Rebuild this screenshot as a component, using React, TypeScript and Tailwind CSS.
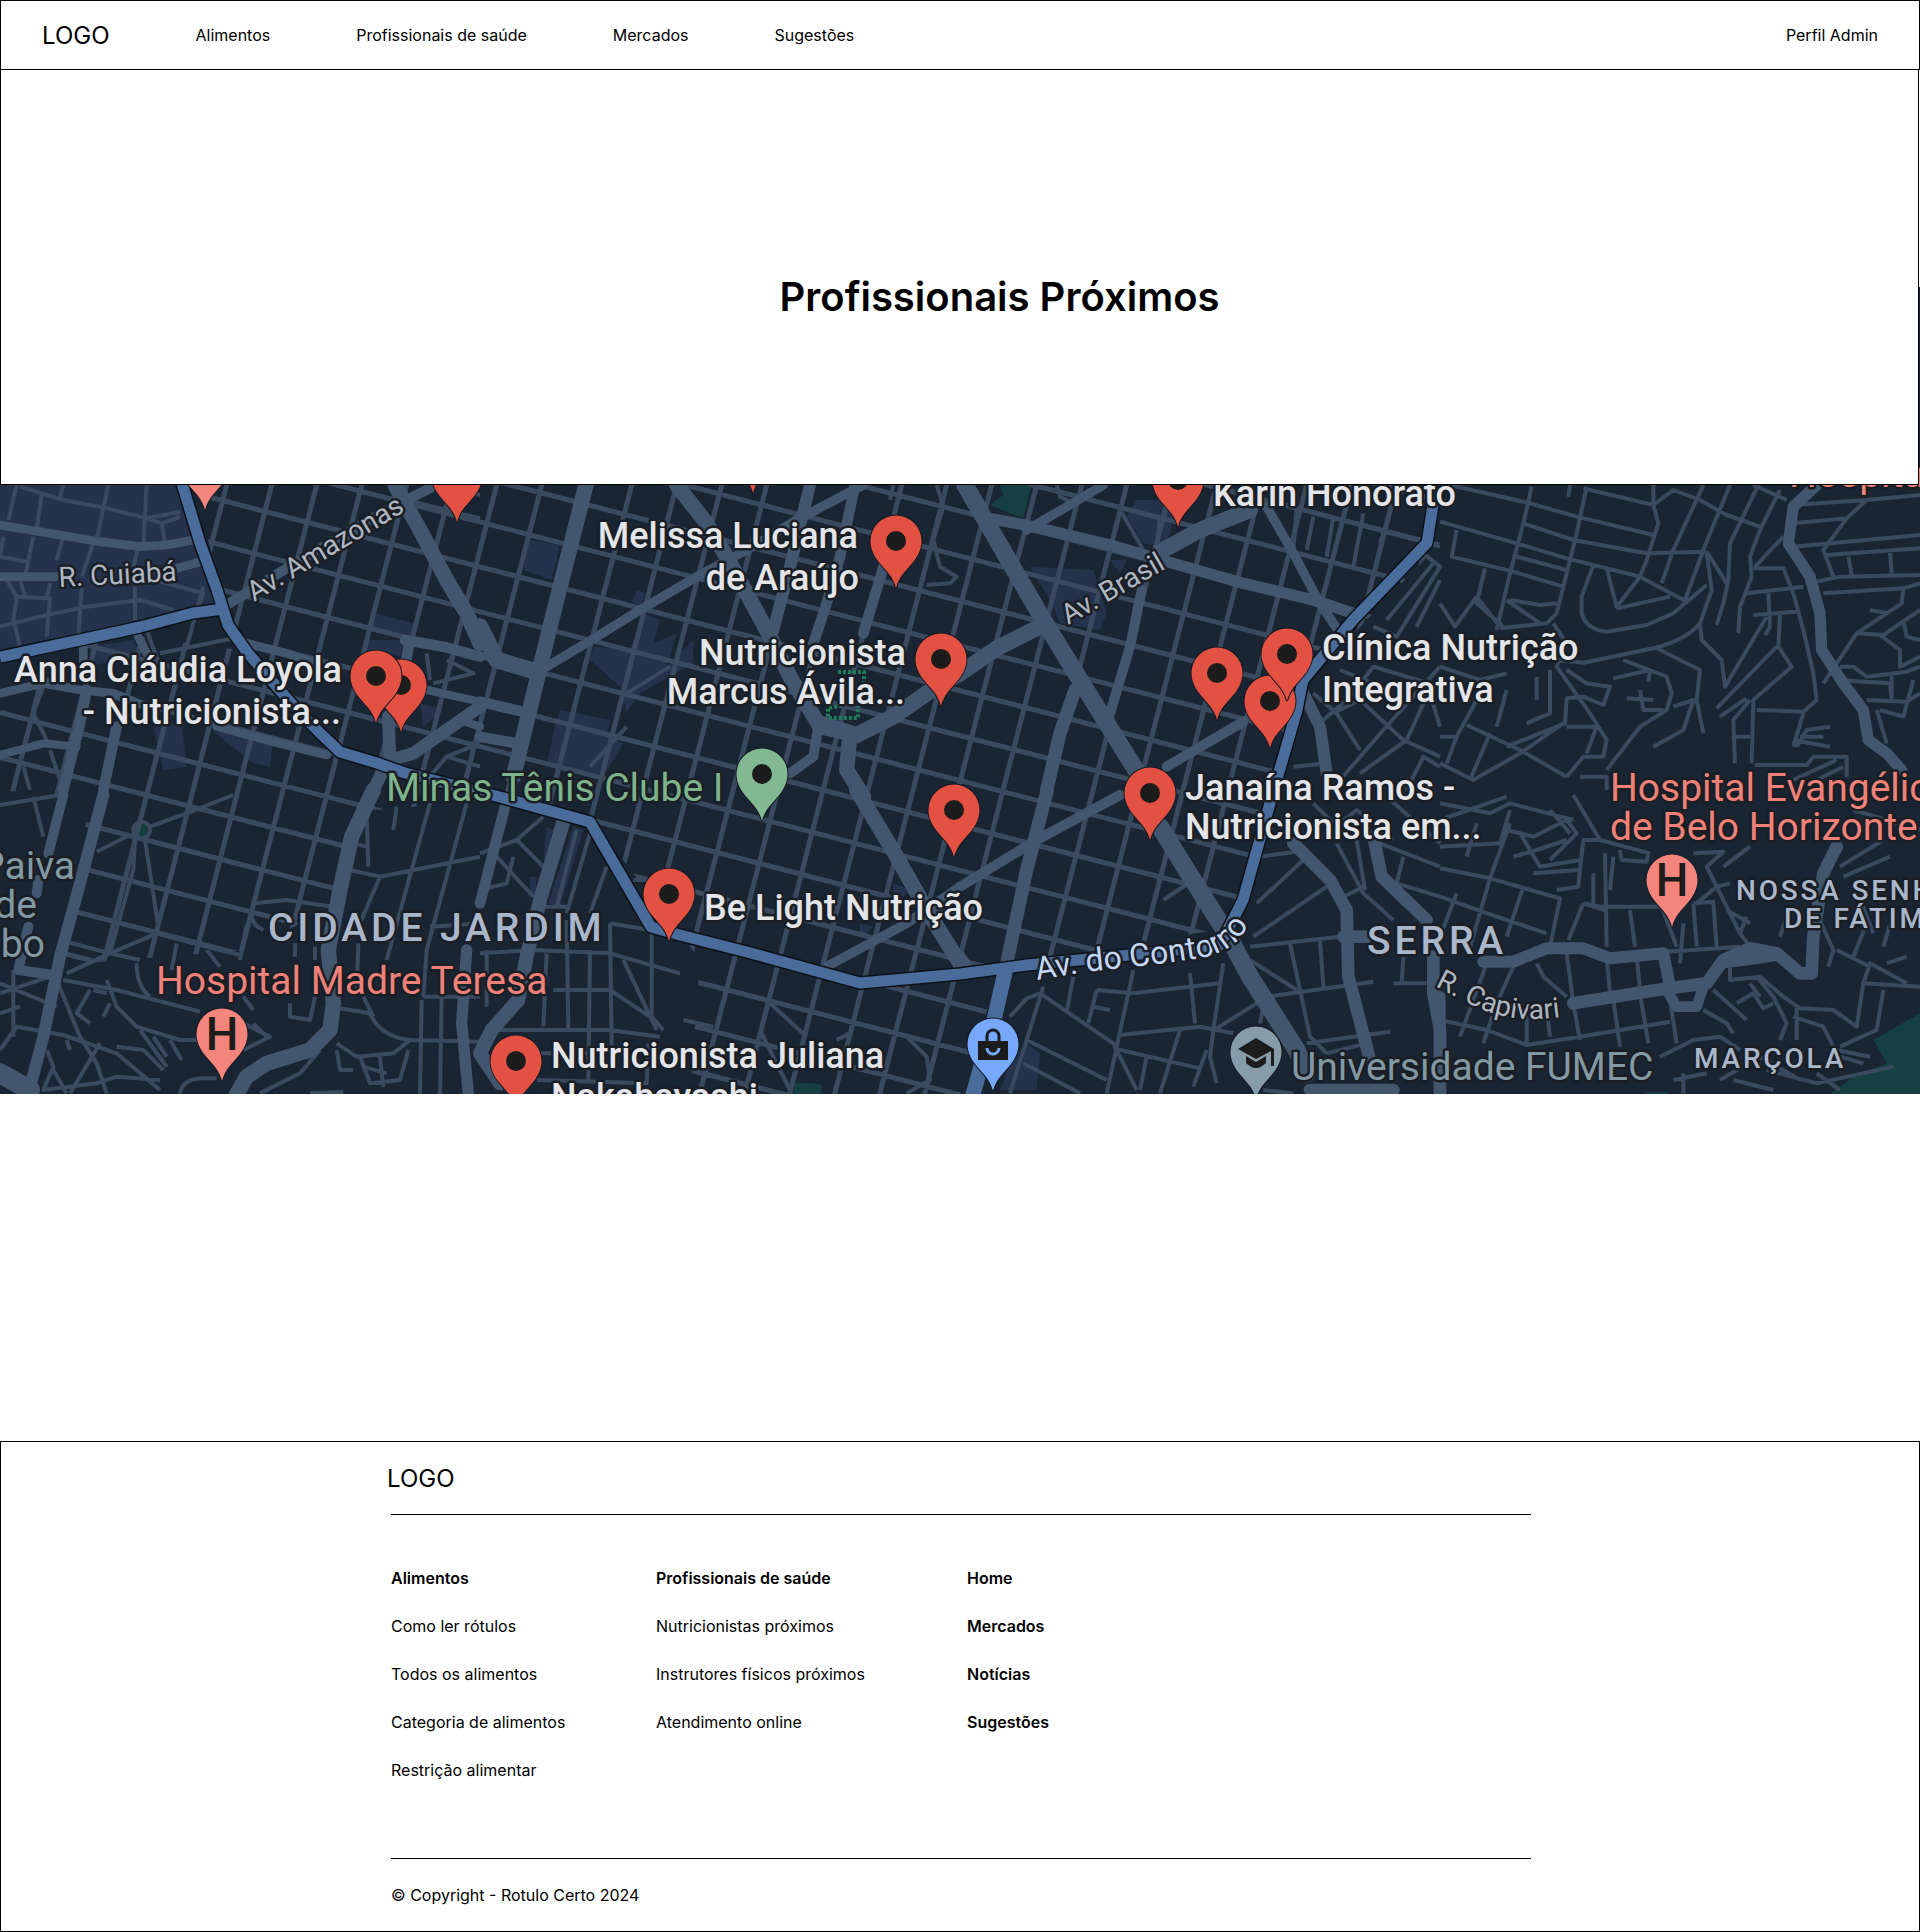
type Road = [width: number, d: string];

type Tile = {
  x: number;
  y: number;
  blocks: string;
  parks: string;
  lanes: string;
  streets: Road[];
};

const NAV = ["Alimentos", "Profissionais de saúde", "Mercados", "Sugestões"];

const FOOTER_COLUMNS = [
  {
    title: "Alimentos",
    width: "w-[265px]",
    links: ["Como ler rótulos", "Todos os alimentos", "Categoria de alimentos", "Restrição alimentar"],
  },
  {
    title: "Profissionais de saúde",
    width: "w-[311px]",
    links: ["Nutricionistas próximos", "Instrutores físicos próximos", "Atendimento online"],
  },
];

const FOOTER_MAIN = ["Home", "Mercados", "Notícias", "Sugestões"];

/* The inner city is a regular grid of streets, turned by about 14 degrees. */
const SLOPE = 0.258;
const CITY_GRID = [
  ...Array.from({ length: 34 }, (_, i) => {
    const y = 522 + 44.9 * (i - 12);
    return `M0 ${y - 480 * SLOPE}L1920 ${y + 1440 * SLOPE}`;
  }),
  ...Array.from({ length: 44 }, (_, i) => {
    const x = 498 + 45 * (i - 12);
    return `M${x} 480L${x - 620 * SLOPE} 1100`;
  }),
].join("");

const CITY_AREA =
  "M195 485H1440L1462 520L1310 680L1260 830L1240 925L1000 970L960 1094H690L700 960L600 830L500 800L350 812L335 905L250 950L60 965L90 800L0 790V700L90 630L240 650L225 610Z";

/* Tiles are drawn at three units to the pixel. */
const TILES: Tile[] = [
  {
    x: 0,
    y: 480,
    blocks:
      "M0 15H560L650 370L0 520ZM1110 395L1240 430L1230 470L1110 440ZM1100 480H1215L1200 530L1100 510ZM460 740L545 730L560 860L490 870ZM640 755L820 775L810 860L760 850ZM270 500L400 480L420 520L270 560ZM1260 670L1330 690L1270 740Z",
    parks: "",
    lanes:
      "M50 15L25 120M125 40L110 150M190 15L180 50M60 20L190 60L300 80L440 115L540 95M325 15L290 180M440 15L430 200M440 115L485 130L495 190M485 130L540 110M100 170L75 290M190 170L170 240M10 170L0 230M280 190L245 290M0 230L80 245M415 200L400 260M20 300L50 350L140 355L150 310M50 350L40 420L60 500M60 300L75 350M150 350L140 470M245 320L235 470M405 320L405 420M0 440L140 405L260 380L420 360L520 390M420 290L520 315L610 340L590 400M610 320L560 500M480 520L700 475M440 450L480 560M70 860L90 930M150 810L190 930M130 620L100 700L150 800M1330 15L1440 45M1220 60L1440 115M1440 790L1340 830L1280 900L1240 930M1340 830L1440 860M1280 520L1290 600M1340 540L1420 580L1300 610",
    streets: [
      [26, "M0 135L180 165L300 185L420 200L500 195L580 180"],
      [26, "M530 265L620 240M0 290H170"],
      [30, "M680 375L860 265L1090 130L1200 70L1290 25"],
      [46, "M1185 15L1260 150L1340 300L1400 400L1440 490"],
      [26, "M740 490L860 520L950 550M650 740L800 780L980 825"],
      [32, "M1215 480L1330 500L1440 530M1228 490L1215 560"],
      [38, "M1440 680L1340 750L1240 820L1170 840L1165 710M1165 840L1120 930"],
      [26, "M0 640L130 610L240 630L340 640L440 680M410 460L440 520M250 500V560"],
      [32, "M260 630L240 730L190 930M350 740L310 930"],
      [24, "M0 825L130 790L230 800M1280 630L1440 665M1380 720L1440 740"],
    ],
  },
  {
    x: 480,
    y: 480,
    blocks:
      "M150 180L240 195L215 300L130 270ZM470 330L495 340L485 380L455 365ZM490 400L540 420L520 490L590 460L560 560L640 480V550L480 640L440 695L420 620L330 540L340 500L450 510ZM240 690L390 720L380 770L430 790L370 890L200 860L220 760Z",
    parks: "",
    lanes: "M330 860L440 740M440 640L570 560M1370 15L1390 80L1360 180L1380 260L1430 290L1410 310L1340 315M1240 15L1230 60",
    streets: [
      [46, "M318 15L210 440L100 890"],
      [46, "M590 15L680 130L740 230L860 450L930 590L1020 740L1110 760"],
      [28, "M200 560L350 470L480 390L650 290L800 210L950 120L1150 15"],
      [36, "M990 15L930 260L880 450"],
      [32, "M1125 15L1080 230L1040 370L1000 490M1220 230L1150 460"],
      [50, "M0 440L50 540L170 575"],
      [32, "M0 665L150 700M0 770L110 790"],
      [48, "M1020 730L1130 765L1240 710L1340 640L1440 580"],
      [46, "M1110 760L1100 870L1150 950"],
      [30, "M1015 740L1000 830L930 880"],
    ],
  },
  {
    x: 960,
    y: 480,
    blocks:
      "M210 260L400 270L440 400L420 450L300 430L270 360ZM530 60L600 60L640 110L620 200L550 190L500 110ZM450 240L500 240L480 280Z",
    parks: "M120 15H215L190 115L90 75L130 45Z",
    lanes:
      "M290 15L300 50L340 70M480 90L550 210M600 110L590 200M1010 80L1000 210M1060 110L1040 210M1120 110L1100 230M1210 100L1180 260M1280 130L1260 190M1050 95L1440 200M1390 220L1440 260L1310 470L1240 440M1440 300L1370 440M1420 250L1280 420M1060 640L1130 700L1200 810M1090 720L1170 650L1240 560L1440 620M1140 570L1240 610M1120 700L1200 660L1330 780L1440 830M1140 900L1270 750L1440 560M1200 880L1340 780L1400 650M1340 930L1390 830L1440 860M1000 860L1100 850M1410 640L1440 740",
    streets: [
      [52, "M15 15L250 420L360 600L540 890"],
      [48, "M0 580L110 505L240 440M600 215L720 150L870 90"],
      [28, "M200 150L320 80L430 15M920 80L1000 220L1080 370L1140 460"],
      [34, "M60 110L220 140L450 195L640 250L850 310L1060 360L1180 400"],
      [30, "M545 330L510 500L450 700M620 860L850 725"],
      [40, "M345 630L300 760L260 930"],
      [36, "M1030 640L1080 740L1100 880"],
    ],
  },
  {
    x: 1440,
    y: 480,
    blocks: "",
    parks: "",
    lanes:
      "M30 15L270 70L410 110L640 165M0 125L230 190L380 235L600 290L740 365M250 130L400 180L620 220L800 215M430 25L640 75L700 30L780 60L860 105L960 140M275 20L250 130L210 280L170 450M440 20L410 160L370 320L350 400L320 430L180 445M50 150L35 230L220 275L370 320M230 230L380 270M390 15L385 50M640 15V75L655 130L620 240L600 290L530 380L500 265M790 15L700 210L665 310M870 15L790 210L735 360M950 25L870 190L865 300L850 370L830 435M940 15L1040 60M1020 30L960 150L930 230L935 290L900 380L895 460M945 260L1030 170M460 255L425 350V400Q440 450 500 455L620 435L700 400L800 315M530 385L690 350M800 215L860 310M800 215L815 330L780 430Q740 480 640 505L430 548L350 540M780 430L785 480L845 540L855 620L980 410M650 505L780 570L770 660L790 760M940 265H1030L1060 340L1090 450L1120 580L1130 660L1090 695L950 690M920 340L1090 320M940 405L1070 395M985 340L990 440L975 465M1020 400L1015 500L1055 560L940 660L935 850M830 685L1010 500M340 430L380 490L350 560L450 700L500 780L490 830L430 830L380 890M550 540L680 590L695 640L680 690L600 740L500 870M520 595L630 570L625 605M560 655L640 660M600 630L610 690H670M640 800L730 750L760 660L700 680M380 570L440 610L510 620L490 675L430 650L380 655L375 730L200 800M0 850L100 900L240 820L370 730M80 735L240 810L380 890M0 770L50 770L110 660M50 770L20 850M150 760L90 900M380 740H470L440 820M200 360L300 430M210 360L300 375L350 370M110 350L45 440L0 370M110 350L180 440M135 265L110 370L190 440M0 560L120 600L200 580M200 630L170 740M330 570V700L260 730M290 590V660M1060 75L1280 60L1440 45M1060 130L1220 115L1280 60M1220 115L1150 210L1180 290M1060 200L1220 185L1440 165M1160 225L1440 205M1225 230L1235 285M1350 215L1355 280M1130 305L1200 290L1440 285M1150 340L1390 325L1440 310M1390 325L1385 370L1250 460L1150 610M1290 390L1340 400M1250 460L1330 465L1440 390M1320 465L1380 510V560L1440 530M1390 420L1400 470L1440 480M1200 560H1240L1280 590L1400 575L1440 560M1190 600L1350 610L1355 660M1355 580V660M1280 660L1400 665L1440 640M1320 690L1390 710L1420 600M1310 690L1340 790M945 855H1100L1120 830H1220V890M1070 800L1100 750L1170 740M1060 780L1170 800M1080 770H1150M885 850L880 720L930 660M840 710L920 655M1090 700L1060 800M875 770H930M1060 900L1190 840M1110 910L1210 860M420 890H500V930",
    streets: [[34, "M1130 15L1060 80L1045 190L1110 290L1140 400L1145 510L1210 610L1270 690L1285 780L1340 820L1385 870"]],
  },
  {
    x: 0,
    y: 790,
    blocks: "",
    parks: "M410 105H440V135L425 145L408 135Z",
    lanes:
      "M0 45L180 15M100 20L130 140M290 185L390 135M450 110L560 70L700 15M400 120A25 25 0 1 0 450 120A25 25 0 1 0 400 120M405 150L400 240L330 490M435 150L475 410M180 450L330 490L420 510M200 550L330 490L470 430M470 430L600 465L720 495M620 480L660 530M740 405L720 510M530 460L515 540M410 520Q410 590 450 620M190 570L350 600L600 665M0 610L150 560M0 580L170 650M40 540V740M170 570L240 740L290 820L320 910M0 780L50 710L190 735L350 790L480 900M320 570L350 650L410 710L540 750H600M270 600L230 670L270 700M310 680L330 640M280 600L320 610M420 720L500 830M510 750L545 810M350 770L430 780L490 840M460 740L500 800M140 780L160 830L130 900L290 880L350 860L480 870M160 840L200 910M300 760L210 910M200 750L210 780M540 912Q545 870 600 865L650 865M730 620L760 660M730 700L810 740L730 780M760 700L800 740M760 340L860 330L1000 350M760 340Q740 400 790 420M1050 240L1140 260L1240 240L1440 200M1140 260L1080 400M1075 460L1070 600M1290 40L1160 510M1400 40L1280 480L1270 620M1270 620H1440M1265 630L1260 912M1325 620L1320 912M1230 750L1440 755M1290 410L1440 400M1020 655L1110 670Q1140 740 1230 750L1180 790L1070 800L1010 760M1090 620L1120 680M960 780L900 850L780 910M930 910L1030 905M870 640V680L930 690L945 620M885 460V500M945 470V510M1080 800L1110 880L1200 870L1225 780M1090 830L1160 850M1140 800L1150 890M1010 780L1020 840H1060M1190 50L1180 120M1100 70L1105 230M1060 160L1100 170M0 670L60 650",
    streets: [
      [30, "M190 15L145 190M115 270L110 310M85 410L55 540L160 555"],
      [36, "M310 15L240 280L180 500L130 740L85 912"],
      [46, "M1120 0L1055 140L1020 300L985 480L1000 640L990 720L930 780L800 820L740 860L710 912"],
      [60, "M0 850L90 900"],
      [34, "M1400 480L1385 700L1405 912"],
    ],
  },
  {
    x: 480,
    y: 790,
    blocks:
      "M280 110L310 120L240 350L205 340ZM200 110L220 120L190 220ZM150 260L170 260L165 320L150 310ZM1240 280L1290 300L1270 320L1240 310ZM1140 400L1180 410L1160 430L1140 430Z",
    parks: "M945 880H1000L1025 885V912H940Z",
    lanes:
      "M110 150L190 230M0 190L110 150L190 80M50 200L160 320M0 300L80 280L100 200M290 120L230 350M330 130L260 370M380 230L330 370M180 350H260M0 490L160 480L390 490L600 550M20 480V650M200 490L190 710M260 390L265 720M330 480L325 870M390 400L395 770M515 420V680L550 720M390 400L510 420M220 600H390L510 680M60 720H390L540 740M430 510L530 720M160 790H320M170 870L500 880L505 760M460 270H500M870 640L980 740M840 720L930 900M1280 740L1340 800L1350 870L1280 910M1070 750L1110 730M610 690L700 710",
    streets: [
      [32, "M75 50L0 340"],
      [42, "M250 95L180 330L140 500L115 630L35 720L0 790L60 880"],
      [46, "M1130 0L1250 200L1340 360L1440 520"],
      [28, "M1040 530L1280 400L1440 290"],
    ],
  },
  {
    x: 960,
    y: 790,
    blocks: "M200 760L240 790L230 900H120L150 820Z",
    parks: "",
    lanes:
      "M690 550L705 700M790 520L760 720L750 800L770 880M410 600L520 610L780 580M480 735L720 710L820 730M770 715L890 640M660 720L600 910M240 610L460 760L530 900M250 590L150 910M150 680L200 625L240 610M410 600L385 700M400 650L450 660M340 560L320 665M520 540L440 910M200 750L440 870M190 820L360 910M460 775L720 835M560 800L540 900M740 780L700 890M870 470L1140 440M880 440L1100 290M890 340L1030 210M990 460L1050 740L1100 790M1080 450L1090 590M870 510L1010 600M920 620L1240 575M1040 760L1290 725M1100 790L1220 760M900 700L910 650M1130 160L1210 310L1300 390M1190 150L1215 300M1150 320L1210 290M1330 200L1310 280L1440 320M1260 160L1440 230M1300 580H1400M1330 500L1325 580M900 200L1010 185M1060 40L1120 100M1140 100L1190 60L1300 150M1280 20L1440 160M700 270L610 330M910 900L1000 910",
    streets: [
      [54, "M600 110L680 240L800 430L870 560L1010 780L1040 850"],
      [30, "M0 290L230 150L480 15"],
      [40, "M262 0L200 240L140 520"],
      [38, "M1000 160L1110 270L1160 360L1165 560L1230 810M1150 440H1220"],
      [38, "M1240 140L1265 260L1400 390M1420 500V610L1440 720V912"],
      [38, "M1050 900H1300"],
      [34, "M0 500L20 530"],
    ],
  },
  {
    x: 1440,
    y: 790,
    blocks: "",
    parks: "M1440 670L1300 750L1340 820L1240 860L1170 912H1440ZM620 905H680V912H620Z",
    lanes:
      "M0 235L150 265L360 325L330 470M0 320L170 380L320 430M210 100L150 265L85 490M250 290L200 440M50 310L0 440M0 40L150 70L210 40L400 90M0 90L200 20M0 170L180 160L210 60M80 200L110 100M200 120L280 140L380 90L410 130L330 210M240 130L300 230L420 210M330 60L390 130M220 200L290 180L380 150M400 15L480 150L630 190M280 250L420 240L430 150L480 150M420 240L415 290L350 300M430 340L480 350L660 350M430 340L385 450M430 340L495 360M495 190L500 470M570 360L585 470M540 180L545 210L620 215L625 190M460 250V340M520 200L510 300M760 340L770 470M820 340L830 470M760 340L825 335M680 485L900 470M665 350L710 470M730 400L720 520M830 290L900 430L930 470M830 290L770 340M760 190L850 185L800 230L830 290M850 230L930 170M830 290L870 280M500 500L510 610M590 500L600 600M380 490L400 640L420 750M290 520L310 560L380 620M220 530L170 640L130 760M140 520L60 740M0 690L140 720L260 765L420 740L690 695M520 630L540 770M600 610L625 760M690 630L710 760M260 670V770M320 660L330 740M660 800L760 750L840 740L900 780M790 660L860 700L880 730M820 600L920 690M870 530V570L960 560L1030 620L1080 655L1180 660L1250 710L1270 580L1440 590M1270 580L1290 520L1400 580M1190 480L1290 530M950 560L1000 620L1040 700L1020 750M890 640L940 610L970 655L1000 640M930 580L960 620M1060 680L1150 710L1180 770M1070 650V750M1330 600L1310 720L1200 770M1190 780L1290 800M1200 800L1270 820M840 870L960 800L1080 870M700 870L800 850M1130 850L1200 900M730 850V910M880 870L1000 900M980 840L1130 880L1360 830M1020 440L1040 380M1130 370L1180 480L1165 530M1280 400L1240 500M1200 230L1330 150M1210 260L1350 200M1240 60L1440 120M860 360L930 400M1260 330L1300 430M1360 370L1330 470M1400 500L1340 520M920 380L900 430",
    streets: [
      [36, "M130 515H220L320 475L430 475L510 505L670 490L690 590"],
      [38, "M400 640L650 600L800 580L850 510L930 475L1010 490L1080 550L1115 550L1120 440L1150 250L1190 170"],
      [32, "M680 600L710 650L770 650L790 590"],
      [30, "M850 520L930 510L1000 500"],
      [34, "M0 620V750"],
    ],
  },
];

const HIGHWAYS =
  "M181 480L200 543L217 590L228 625L247 652L290 702L320 733L340 752L377 763L405 773L500 797L590 822L651 927L680 935L747 952L860 983L960 974L1027 965L1160 952L1220 945L1243 900L1270 803L1297 710L1303 680L1353 620L1427 543L1433 505M0 657L80 640L140 627L193 613L223 609";

type Kind = "place" | "health" | "sport" | "school" | "district" | "area" | "road";

const LABEL_STYLE: Record<Kind, string> = {
  place: "fill-[#e3e5e9] text-[36px] font-medium",
  health: "fill-[#ee8278] text-[39px]",
  sport: "fill-[#7db48b] text-[39px]",
  school: "fill-[#8299a4] text-[39px]",
  district: "fill-[#aab6ca] text-[39px] font-medium tracking-widest",
  area: "fill-[#aab6ca] text-[28px] font-medium tracking-widest",
  road: "fill-[#aeb6c2] text-[28px]",
};

type Label = { kind: Kind; x: number; y: number; text: string; end?: boolean; turn?: number };

const LABELS: Label[] = [
  { kind: "place", x: 342, y: 682, text: "Anna Cláudia Loyola", end: true },
  { kind: "place", x: 341, y: 724, text: "- Nutricionista...", end: true },
  { kind: "place", x: 858, y: 548, text: "Melissa Luciana", end: true },
  { kind: "place", x: 859, y: 590, text: "de Araújo", end: true },
  { kind: "place", x: 906, y: 665, text: "Nutricionista", end: true },
  { kind: "place", x: 905, y: 704, text: "Marcus Ávila...", end: true },
  { kind: "place", x: 1213, y: 506, text: "Karin Honorato" },
  { kind: "place", x: 1322, y: 660, text: "Clínica Nutrição" },
  { kind: "place", x: 1322, y: 702, text: "Integrativa" },
  { kind: "place", x: 1185, y: 800, text: "Janaína Ramos -" },
  { kind: "place", x: 1185, y: 839, text: "Nutricionista em..." },
  { kind: "place", x: 704, y: 920, text: "Be Light Nutrição" },
  { kind: "place", x: 551, y: 1068, text: "Nutricionista Juliana" },
  { kind: "place", x: 551, y: 1109, text: "Nakabayashi" },
  { kind: "sport", x: 386, y: 801, text: "Minas Tênis Clube I" },
  { kind: "health", x: 156, y: 994, text: "Hospital Madre Teresa" },
  { kind: "health", x: 1610, y: 801, text: "Hospital Evangélico" },
  { kind: "health", x: 1610, y: 840, text: "de Belo Horizonte" },
  { kind: "health", x: 1789, y: 487, text: "Hospital" },
  { kind: "school", x: 1291, y: 1080, text: "Universidade FUMEC" },
  { kind: "school", x: 75, y: 879, text: "Paiva", end: true },
  { kind: "school", x: 37, y: 918, text: "de", end: true },
  { kind: "school", x: 45, y: 957, text: "bo", end: true },
  { kind: "district", x: 268, y: 941, text: "CIDADE JARDIM" },
  { kind: "district", x: 1367, y: 954, text: "SERRA" },
  { kind: "area", x: 1736, y: 900, text: "NOSSA SENHORA" },
  { kind: "area", x: 1784, y: 928, text: "DE FÁTIMA" },
  { kind: "area", x: 1694, y: 1068, text: "MARÇOLA" },
  { kind: "road", x: 59, y: 587, text: "R. Cuiabá", turn: -3 },
  { kind: "road", x: 254, y: 602, text: "Av. Amazonas", turn: -31 },
  { kind: "road", x: 1068, y: 625, text: "Av. Brasil", turn: -30 },
];

const RED_PINS = [
  [457, 522],
  [753, 493],
  [1178, 527],
  [401, 732],
  [376, 723],
  [896, 588],
  [941, 706],
  [1217, 720],
  [1270, 748],
  [1287, 701],
  [1150, 840],
  [954, 857],
  [669, 941],
  [516, 1108],
];

const HOSPITAL_PINS = [
  [205, 510],
  [222, 1081],
  [1672, 927],
];

const PIN_SHAPE =
  "M0 0C-3 -12 -10 -17 -18 -27C-23 -34 -25.5 -40 -25.5 -47A25.5 25.5 0 1 1 25.5 -47C25.5 -40 23 -34 18 -27C10 -17 3 -12 0 0Z";

function PinBody({ fill }: { fill: string }) {
  return <path d={PIN_SHAPE} fill={fill} stroke="#151a22" strokeWidth={2} paintOrder="stroke" />;
}

function DotPin({ x, y, fill }: { x: number; y: number; fill: string }) {
  return (
    <g transform={`translate(${x} ${y})`}>
      <PinBody fill={fill} />
      <circle cy={-47} r={10} fill="#1c1c1d" />
    </g>
  );
}

function MapLabel({ kind, x, y, text, end, turn }: Label) {
  return (
    <text
      x={x}
      y={y}
      textAnchor={end ? "end" : "start"}
      transform={turn ? `rotate(${turn} ${x} ${y})` : undefined}
      className={LABEL_STYLE[kind]}
    >
      {text}
    </text>
  );
}

function CityMap() {
  const place = (t: Tile) => `translate(${t.x} ${t.y}) scale(${1 / 3})`;
  return (
    <svg
      viewBox="0 287 1920 807"
      preserveAspectRatio="xMidYMid slice"
      role="img"
      aria-label="Mapa de profissionais próximos"
      className="block h-[807px] w-full bg-[#1a2534] font-['Roboto',sans-serif]"
    >
      <defs>
        <clipPath id="city">
          <path d={CITY_AREA} />
        </clipPath>
        <path id="contorno" d="M1037 980L1093 971L1133 967L1173 962L1206 957Q1228 951 1240 938Q1254 920 1264 885" />
        <path id="capivari" d="M1435 986L1470 1004Q1495 1017 1525 1019Q1550 1020 1590 1012" />
      </defs>

      {TILES.map((t) => (
        <g key={`${t.x}-${t.y}`} transform={place(t)}>
          <path d={t.blocks} fill="#25324c" />
          <path d={t.parks} fill="#163f41" />
        </g>
      ))}

      <g fill="none" strokeLinejoin="round">
        <g stroke="#394a5e">
          <path d={CITY_GRID} clipPath="url(#city)" strokeWidth={5} />
          {TILES.map((t) => (
            <path key={`${t.x}-${t.y}`} d={t.lanes} transform={place(t)} strokeWidth={12} />
          ))}
        </g>
        <g stroke="#42566d" strokeLinecap="round">
          {TILES.map((t) => (
            <g key={`${t.x}-${t.y}`} transform={place(t)}>
              {t.streets.map(([width, d]) => (
                <path key={d} d={d} strokeWidth={width} />
              ))}
            </g>
          ))}
        </g>
        <path d={HIGHWAYS} stroke="#0c1119" strokeWidth={14} />
        <path d={HIGHWAYS} stroke="#4a6c9b" strokeWidth={11} />
        <path d="M1006 968L994 1020L972 1098" stroke="#4a6c9b" strokeWidth={15} />
        <path d="M838 672H864V686M840 694V706L828 708V718H858V706" stroke="#1f7a58" strokeWidth={4} strokeDasharray="3 2" />
      </g>

      {HOSPITAL_PINS.map(([x, y]) => (
        <g key={x} transform={`translate(${x} ${y})`}>
          <PinBody fill="#f3857c" />
          <text y={-31} textAnchor="middle" className="fill-[#1c1c1d] text-[46px] font-medium">
            H
          </text>
        </g>
      ))}
      {RED_PINS.map(([x, y]) => (
        <DotPin key={`${x}-${y}`} x={x} y={y} fill="#e35142" />
      ))}
      <DotPin x={762} y={821} fill="#82b892" />

      <g transform="translate(993 1091)">
        <PinBody fill="#76a8fc" />
        <path d="M-15 -50H15V-31H-15Z" fill="#1c1c1d" />
        <path d="M-6 -50V-55A6 6 0 0 1 6 -55V-50" fill="none" stroke="#1c1c1d" strokeWidth={3} />
        <path d="M-6 -43A6 6 0 0 0 6 -43" fill="none" stroke="#76a8fc" strokeWidth={3} />
      </g>
      <g transform="translate(1256 1099)">
        <PinBody fill="#869ca8" />
        <path d="M0 -61L18 -50V-33H15V-48L0 -40L-18 -50Z" fill="#1c1c1d" />
        <path d="M-10 -43L0 -37L10 -43V-36Q0 -26 -10 -36Z" fill="#1c1c1d" />
      </g>

      <g stroke="#1a1e25" strokeWidth={5} strokeLinejoin="round" paintOrder="stroke">
        {LABELS.map((label) => (
          <MapLabel key={`${label.text}-${label.y}`} {...label} />
        ))}
        <text className="fill-[#c3d6f5] text-[32px]">
          <textPath href="#contorno">Av. do Contorno</textPath>
        </text>
        <text className="fill-[#aeb6c2] text-[28px]">
          <textPath href="#capivari">R. Capivari</textPath>
        </text>
      </g>
    </svg>
  );
}

function Header() {
  return (
    <header className="flex h-[70px] items-center justify-between border border-black bg-white px-[41px]">
      <div className="flex items-center gap-[86px]">
        <a href="#" className="pt-0.5 text-2xl">
          LOGO
        </a>
        <nav className="flex items-center gap-[86px]">
          {NAV.map((item) => (
            <a key={item} href="#">
              {item}
            </a>
          ))}
        </nav>
      </div>
      <a href="#">Perfil Admin</a>
    </header>
  );
}

function Footer() {
  return (
    <footer className="mt-[347px] border border-black bg-white pl-0.5">
      <div className="mx-auto max-w-[1140px]">
        <div className="border-b border-black pt-[21px] pb-[19px]">
          <a href="#" className="-ml-1 block text-2xl leading-8">
            LOGO
          </a>
        </div>
        <div className="flex border-b border-black pt-[51px] pb-[76px]">
          {FOOTER_COLUMNS.map((column) => (
            <div key={column.title} className={column.width}>
              <h2 className="font-semibold">{column.title}</h2>
              <ul className="mt-6 flex flex-col gap-6">
                {column.links.map((link) => (
                  <li key={link}>
                    <a href="#">{link}</a>
                  </li>
                ))}
              </ul>
            </div>
          ))}
          <ul className="flex flex-col gap-6 font-semibold">
            {FOOTER_MAIN.map((link) => (
              <li key={link}>
                <a href="#">{link}</a>
              </li>
            ))}
          </ul>
        </div>
        <p className="py-6">© Copyright - Rotulo Certo 2024</p>
      </div>
    </footer>
  );
}

export default function App() {
  return (
    <div className="bg-white font-['Inter',sans-serif] text-base text-black">
      <Header />
      <main>
        <section className="relative z-10 mr-px flex h-[415px] items-center justify-center border border-t-0 border-black bg-white pt-10 pl-20">
          <h1 className="text-[40px] leading-[48px] font-semibold">Profissionais Próximos</h1>
        </section>
        <section className="-mt-[198px]">
          <CityMap />
        </section>
      </main>
      <Footer />
    </div>
  );
}
